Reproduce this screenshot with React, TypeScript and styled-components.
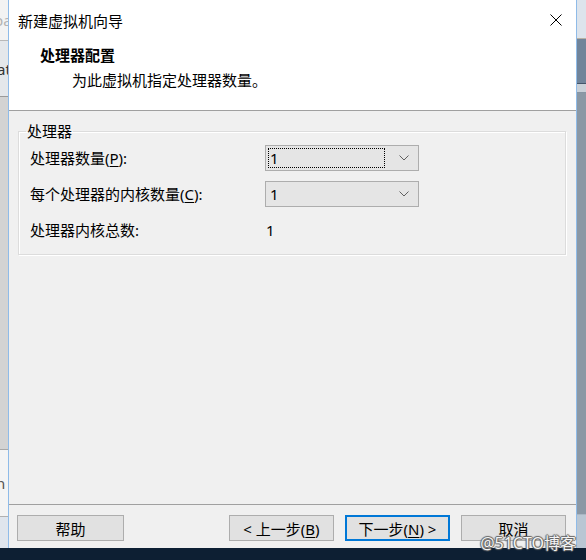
import styled, { createGlobalStyle } from "styled-components";

const GlobalStyle = createGlobalStyle`
  html, body {
    margin: 0;
    padding: 0;
  }
  body {
    font-family: "Noto Sans", "Noto Sans CJK SC", sans-serif;
    font-size: 15px;
    color: #000;
    background: #0d1f33;
  }
`;

const Screen = styled.div`
  position: relative;
  width: 586px;
  height: 560px;
  display: flex;
  flex-direction: column;
  overflow: hidden;
`;

const Desktop = styled.div`
  display: flex;
  height: 548px;
`;

const Taskbar = styled.div`
  flex: 1;
  background: #0d1f33;
`;

// windows behind the dialog, only a sliver of each shows
const Behind = styled.div<{ $width: number }>`
  width: ${({ $width }) => $width}px;
  display: flex;
  flex-direction: column;
  overflow: hidden;
`;

const Band = styled.div<{ $h?: number; $bg: string; $color?: string; $line?: string }>`
  ${({ $h }) => ($h ? `height: ${$h}px;` : "flex: 1;")}
  background: ${({ $bg }) => $bg};
  color: ${({ $color }) => $color || "#999"};
  border-bottom: 1px solid ${({ $line }) => $line || "transparent"};
  font-size: 15px;
  white-space: nowrap;
  display: flex;
  align-items: center;
`;

const Clipped = styled.span<{ $shift: number }>`
  margin-left: ${({ $shift }) => $shift}px;
`;

const Dialog = styled.div`
  width: 569px;
  box-sizing: border-box;
  display: flex;
  flex-direction: column;
  border-left: 1px solid #8fbbe8;
  border-right: 1px solid #8fbbe8;
  background: #f0f0f0;
`;

const Header = styled.div`
  height: 110px;
  background: #fff;
  border-bottom: 1px solid #a0a0a0;
  display: flex;
  flex-direction: column;
`;

const TitleBar = styled.div`
  height: 40px;
  display: flex;
  align-items: center;
  justify-content: space-between;
  padding: 0 14px 0 9px;
`;

const Title = styled.span`
  font-size: 15px;
  color: #000;
`;

const CloseIcon = styled.svg`
  display: block;
`;

const Heading = styled.div`
  margin: 5px 0 0 31px;
  font-weight: bold;
  line-height: 20px;
`;

const Subheading = styled.div`
  margin: 5px 0 0 63px;
  line-height: 20px;
`;

const Body = styled.div`
  flex: 1;
  padding: 11px 10px 0 9px;
`;

const GroupBox = styled.fieldset`
  margin: 0;
  padding: 0;
  border: 1px solid #dcdcdc;
  box-shadow: inset 1px 1px #fff, 1px 1px #fff;
`;

const GroupLabel = styled.legend`
  margin-left: 7px;
  padding: 0 1px;
  line-height: 18px;
`;

const Fields = styled.div`
  display: grid;
  grid-template-columns: 235px 154px;
  grid-auto-rows: 26px;
  row-gap: 10px;
  align-items: center;
  padding: 5px 0 11px 11px;
`;

const Label = styled.span`
  line-height: 18px;
`;

const Key = styled.span`
  text-decoration: underline;
  text-underline-offset: 2px;
`;

const Combo = styled.div`
  height: 26px;
  box-sizing: border-box;
  border: 1px solid #adadad;
  background: #e5e5e5;
  display: flex;
  align-items: center;
  padding: 0 9px 0 2px;
`;

const ComboValue = styled.div<{ $focused?: boolean }>`
  flex: 1;
  height: 20px;
  box-sizing: border-box;
  margin-right: 14px;
  padding-left: 1px;
  line-height: 19px;
  border: 1px dotted ${({ $focused }) => ($focused ? "#000" : "transparent")};
`;

const Value = styled.span`
  padding-left: 1px;
  line-height: 18px;
`;

const Footer = styled.div`
  height: 44px;
  box-sizing: border-box;
  border-top: 1px solid #a0a0a0;
  display: flex;
  align-items: flex-start;
  justify-content: space-between;
  padding: 10px 10px 0 8px;
`;

const ButtonGroup = styled.div`
  display: flex;
  gap: 11px;
`;

const Button = styled.button<{ $default?: boolean; $wide?: boolean }>`
  width: ${({ $wide }) => ($wide ? 107 : 105)}px;
  height: 26px;
  box-sizing: border-box;
  padding: 0;
  font-family: inherit;
  font-size: 15px;
  color: #000;
  background: #e1e1e1;
  border: ${({ $default }) => ($default ? "2px solid #0078d7" : "1px solid #adadad")};
  border-radius: 0;
`;

const Watermark = styled.div`
  position: absolute;
  right: 10px;
  bottom: 8px;
  font-size: 16px;
  line-height: 18px;
  color: #f4f4f4;
  text-shadow: 0 0 1px #555, 1px 0 1px #666, -1px 0 1px #666, 0 1px 1px #666, 0 -1px 1px #666;
`;

const Chevron = () => (
  <svg width="10" height="6" viewBox="0 0 10 6">
    <path d="M0.5 0.5 L5 5 L9.5 0.5" fill="none" stroke="#606060" strokeWidth="1" />
  </svg>
);

export default function App() {
  return (
    <>
      <GlobalStyle />
      <Screen>
        <Desktop>
          <Behind $width={8}>
            <Band $h={40} $bg="#f3f3f3" $color="#b4b4b4" $line="#b8b8b8">
              <Clipped $shift={-6}>pa</Clipped>
            </Band>
            <Band $h={55} $bg="#e4e7eb" $color="#333" $line="#9a9a9a">
              <Clipped $shift={-3}>at</Clipped>
            </Band>
            <Band $bg="#d3d3d3" $line="#a8a8a8" />
            <Band $h={66} $bg="#f4f4f4" $color="#555" $line="#b0b0b0">
              <Clipped $shift={-4}>n</Clipped>
            </Band>
            <Band $h={30} $bg="#dfe5ed" />
          </Behind>

          <Dialog>
            <Header>
              <TitleBar>
                <Title>新建虚拟机向导</Title>
                <CloseIcon width="12" height="12" viewBox="0 0 12 12">
                  <path d="M0.5 0.5 L11.5 11.5 M11.5 0.5 L0.5 11.5" stroke="#000" strokeWidth="1" />
                </CloseIcon>
              </TitleBar>
              <Heading>处理器配置</Heading>
              <Subheading>为此虚拟机指定处理器数量。</Subheading>
            </Header>

            <Body>
              <GroupBox>
                <GroupLabel>处理器</GroupLabel>
                <Fields>
                  <Label>
                    处理器数量(<Key>P</Key>):
                  </Label>
                  <Combo>
                    <ComboValue $focused>1</ComboValue>
                    <Chevron />
                  </Combo>
                  <Label>
                    每个处理器的内核数量(<Key>C</Key>):
                  </Label>
                  <Combo>
                    <ComboValue>1</ComboValue>
                    <Chevron />
                  </Combo>
                  <Label>处理器内核总数:</Label>
                  <Value>1</Value>
                </Fields>
              </GroupBox>
            </Body>

            <Footer>
              <Button $wide>帮助</Button>
              <ButtonGroup>
                <Button>
                  &lt; 上一步(<Key>B</Key>)
                </Button>
                <Button $default>
                  下一步(<Key>N</Key>) &gt;
                </Button>
                <Button>取消</Button>
              </ButtonGroup>
            </Footer>
          </Dialog>

          <Behind $width={9}>
            <Band $h={38} $bg="#dde4ec" $line="#b9b2a4" />
            <Band $h={44} $bg="#71849a" $line="#44556a" />
            <Band $h={8} $bg="#c9d0d8" $line="#8795a3" />
            <Band $bg="#8b98a5" $line="#a9b6c3" />
            <Band $h={32} $bg="#b9c6d3" />
          </Behind>
        </Desktop>
        <Taskbar />
        <Watermark>@51CTO博客</Watermark>
      </Screen>
    </>
  );
}
